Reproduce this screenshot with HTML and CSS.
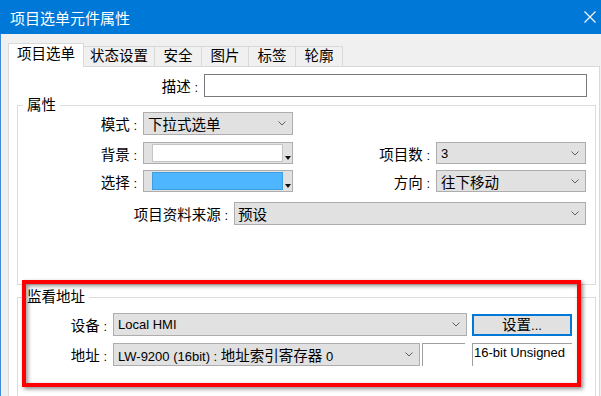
FILE: index.html
```html
<!DOCTYPE html>
<html lang="zh-CN">
  <head>
    <meta charset="utf-8" />
    <title>项目选单元件属性</title>
    <link rel="stylesheet" href="styles.css">
  </head>
  <body>
    <div class="dlg">
      <header class="dlg-title">
        <span>项目选单元件属性</span>
        <svg class="dlg-close" width="12" height="12" viewBox="0 0 12 12">
          <path d="M0.5 0.5L11.5 11.5M11.5 0.5L0.5 11.5" stroke="#fff" stroke-width="1.1" fill="none" />
        </svg>
      </header>

      <nav class="tabs">
        <span class="tab active">项目选单</span>
        <span class="tab">状态设置</span>
        <span class="tab">安全</span>
        <span class="tab">图片</span>
        <span class="tab">标签</span>
        <span class="tab">轮廓</span>
      </nav>

      <div class="panel">
        <div class="row desc-row">
          <span class="lbl lbl-desc">描述<span class="en"> :</span></span>
          <span class="edit"></span>
        </div>

        <fieldset class="grp grp-props">
          <legend>属性</legend>
          <div class="row r1">
            <span class="lbl lbl-a">模式<span class="en"> :</span></span>
            <span class="combo w150">下拉式选单<svg class="chev" width="8" height="5"><polyline points="0.5,0.5 4,4 7.5,0.5" /></svg></span>
          </div>
          <div class="row r2">
            <span class="lbl lbl-a">背景<span class="en"> :</span></span>
            <span class="picker"><span class="swatch"></span><span class="drop"></span></span>
            <span class="lbl lbl-b">项目数<span class="en"> :</span></span>
            <span class="combo w150"><span class="en">3</span><svg class="chev" width="8" height="5"><polyline points="0.5,0.5 4,4 7.5,0.5" /></svg></span>
          </div>
          <div class="row r3">
            <span class="lbl lbl-a">选择<span class="en"> :</span></span>
            <span class="picker"><span class="swatch blue"></span><span class="drop"></span></span>
            <span class="lbl lbl-b">方向<span class="en"> :</span></span>
            <span class="combo w150">往下移动<svg class="chev" width="8" height="5"><polyline points="0.5,0.5 4,4 7.5,0.5" /></svg></span>
          </div>
          <div class="row r4">
            <span class="lbl lbl-src">项目资料来源<span class="en"> :</span></span>
            <span class="combo w352">预设<svg class="chev" width="8" height="5"><polyline points="0.5,0.5 4,4 7.5,0.5" /></svg></span>
          </div>
        </fieldset>

        <fieldset class="grp grp-addr">
          <legend>监看地址</legend>
          <div class="row r1">
            <span class="lbl lbl-c">设备<span class="en"> :</span></span>
            <span class="combo w354"><span class="en">Local HMI</span><svg class="chev" width="8" height="5"><polyline points="0.5,0.5 4,4 7.5,0.5" /></svg></span>
            <span class="btn">设置<span class="en">...</span></span>
          </div>
          <div class="row r2">
            <span class="lbl lbl-c">地址<span class="en"> :</span></span>
            <span class="combo w307"><span><span class="en">LW-9200 (16bit) : </span>地址索引寄存器<span class="en"> 0</span></span><svg class="chev" width="8" height="5"><polyline points="0.5,0.5 4,4 7.5,0.5" /></svg></span>
            <span class="stat stat-idx"></span>
            <span class="stat stat-type"><span class="en">16-bit Unsigned</span></span>
          </div>
        </fieldset>
      </div>

      <div class="mark"></div>
    </div>
  </body>
</html>
```

FILE: styles.css
```css
html,
body {
  margin: 0;
  height: 100%;
  overflow: hidden;
}

body {
  background: #f0f0f0;
  font-family: "Liberation Sans", "Noto Sans CJK SC", sans-serif;
  font-size: 14.5px;
  color: #000;
}

.dlg {
  position: relative;
  height: 100%;
  border-left: 1px solid #3d8bd8;
}

.en {
  font-size: 13px;
}

/* title bar */
.dlg-title {
  display: flex;
  align-items: center;
  justify-content: space-between;
  height: 34px;
  margin-left: -1px;
  padding: 0 5px 0 10px;
  background: #0078d7;
  color: #fff;
  font-size: 15px;
  font-family: "Noto Sans CJK SC", sans-serif;
}

/* tabs */
.tabs {
  display: flex;
  align-items: flex-end;
  height: 23px;
  margin-top: 9px;
  padding-left: 7px;
}

.tab {
  box-sizing: border-box;
  min-width: 48px;
  height: 20px;
  margin-left: -1px;
  padding: 0 6px;
  border: 1px solid #d9d9d9;
  border-bottom: none;
  text-align: center;
  line-height: 19px;
}

.tab.active {
  position: relative;
  z-index: 1;
  height: 24px;
  margin-left: 0;
  margin-bottom: -1px;
  padding: 0 8px 2px;
  background: #fff;
  line-height: 21px;
}

.tab.active + .tab {
  margin-left: -1px;
}

.panel {
  box-sizing: border-box;
  width: 592px;
  height: 330px;
  margin-left: 7px;
  border: 1px solid #d9d9d9;
  border-bottom: none;
  background: #fff;
  overflow: hidden;
}

/* rows and labels */
.row {
  display: flex;
  align-items: center;
}

.lbl {
  flex: none;
  margin-right: 6px;
  text-align: right;
  white-space: nowrap;
}

.lbl-desc { width: 189px; }
.lbl-a { width: 119px; }
.lbl-b { width: 137px; }
.lbl-src { width: 210px; }
.lbl-c { width: 89px; }

.desc-row {
  height: 23px;
  margin-top: 7px;
}

.edit {
  box-sizing: border-box;
  width: 383px;
  height: 23px;
  border: 1px solid #7a7a7a;
  background: #fff;
}

/* group boxes */
.grp {
  margin: 0 3px 0 8px;
  padding: 0;
  border: 1px solid #dcdcdc;
  min-inline-size: 0;
}

.grp legend {
  margin-left: 5px;
  padding: 0 4px;
  line-height: 14px;
}

.grp-props {
  margin-top: 1px;
  padding-bottom: 59px;
}

.grp-props .r1 { height: 23px; }
.grp-props .r2 { height: 22px; margin-top: 7px; }
.grp-props .r3 { height: 22px; margin-top: 6px; }
.grp-props .r4 { height: 23px; margin-top: 10px; }

.grp-addr {
  margin-top: 5px;
  padding-bottom: 30px;
}

.grp-addr .r1 { height: 23px; margin-top: 9px; }
.grp-addr .r2 { height: 23px; margin-top: 7px; }

/* combo boxes */
.combo {
  box-sizing: border-box;
  display: flex;
  align-items: center;
  justify-content: space-between;
  height: 100%;
  padding: 0 6px 0 4px;
  border: 1px solid #adadad;
  background: #e1e1e1;
  white-space: nowrap;
}

.w150 { width: 150px; }
.w352 { width: 352px; padding-left: 3px; }
.w354 { width: 354px; }
.w307 { width: 307px; }

.chev {
  flex: none;
}

.chev polyline {
  fill: none;
  stroke: #606060;
  stroke-width: 1;
}

/* colour pickers */
.picker {
  box-sizing: border-box;
  display: flex;
  width: 150px;
  height: 100%;
  padding: 1px 0;
  border: 1px solid #adadad;
  background: #e1e1e1;
}

.swatch {
  flex: 1;
  margin-left: 8px;
  border: 1px solid #c4c4c4;
  background: #fff;
}

.swatch.blue {
  border-color: #3f9ee0;
  background: #4db6ff;
}

.drop {
  display: flex;
  align-items: flex-end;
  justify-content: center;
  width: 9px;
  padding-bottom: 2px;
  box-sizing: border-box;
}

.drop::after {
  content: "";
  border-top: 4px solid #111;
  border-left: 3.5px solid transparent;
  border-right: 3.5px solid transparent;
}

/* button and static fields */
.btn {
  box-sizing: border-box;
  width: 100px;
  height: 22px;
  margin-left: 5px;
  border: 2px solid #0078d7;
  background: #e1e1e1;
  text-align: center;
  line-height: 18px;
}

.stat {
  box-sizing: border-box;
  height: 100%;
  border-top: 1px solid #a0a0a0;
  border-left: 1px solid #a0a0a0;
}

.stat-idx {
  width: 43px;
  margin-left: 2px;
}

.stat-type {
  width: 100px;
  margin-left: 7px;
  line-height: 16px;
  padding-left: 1px;
}

/* red annotation frame */
.mark {
  position: absolute;
  left: 21px;
  top: 280px;
  width: 559px;
  height: 107px;
  box-sizing: border-box;
  border: 4px solid #ff0000;
  box-shadow: 2px 2px 4px rgba(0, 0, 0, 0.45), inset 2px 2px 4px rgba(0, 0, 0, 0.4);
  pointer-events: none;
}
```
